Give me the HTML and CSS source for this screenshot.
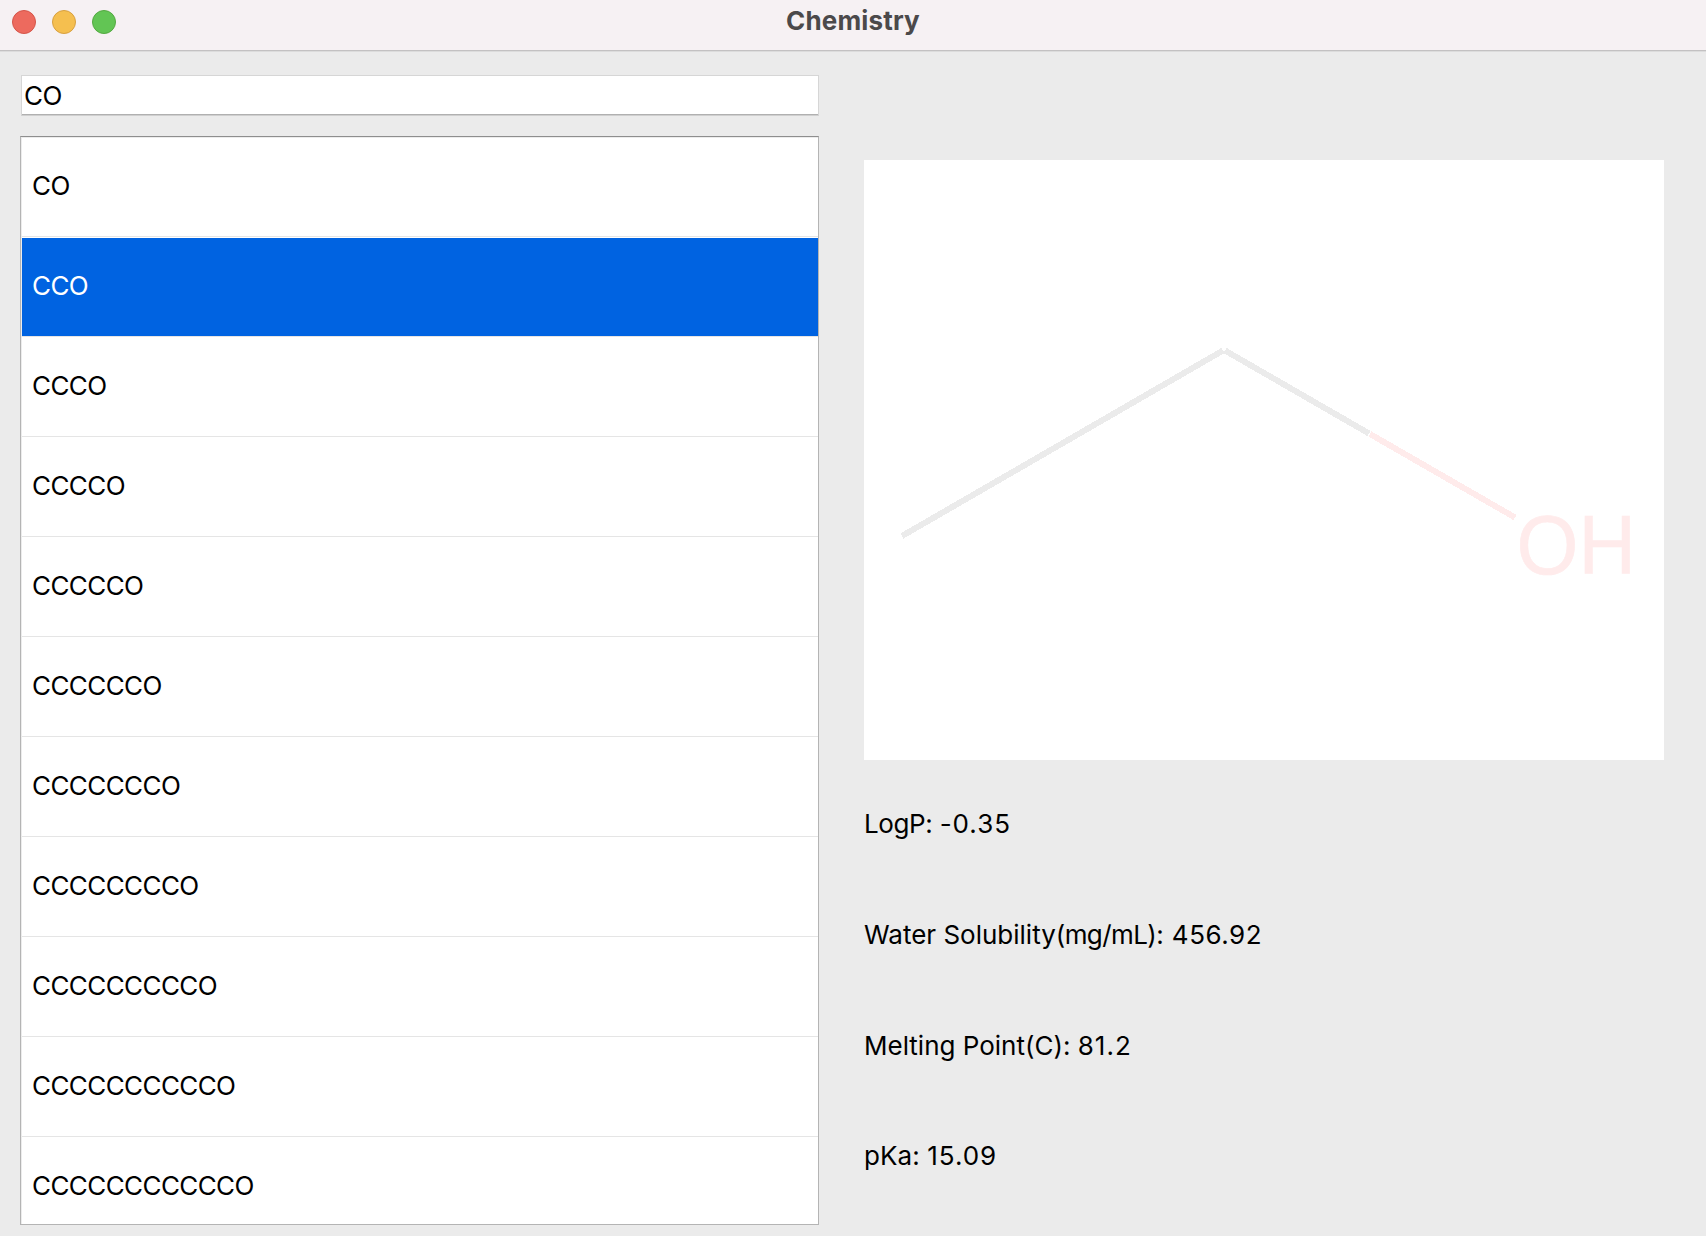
FILE: index.html
```html
<!DOCTYPE html>
<html lang="en">
<head>
<meta charset="utf-8">
<title>Chemistry</title>
<link rel="stylesheet" href="styles.css">
</head>
<body>
<div class="window">
  <header class="titlebar">
    <div class="controls">
      <span class="dot close"></span>
      <span class="dot minimize"></span>
      <span class="dot expand"></span>
    </div>
    <h1 class="title">Chemistry</h1>
  </header>
  <main class="content">
    <section class="search">
      <div class="query">CO</div>
      <ul class="results">
        <li class="row">CO</li>
        <li class="row selected">CCO</li>
        <li class="row">CCCO</li>
        <li class="row">CCCCO</li>
        <li class="row">CCCCCO</li>
        <li class="row">CCCCCCO</li>
        <li class="row">CCCCCCCO</li>
        <li class="row">CCCCCCCCO</li>
        <li class="row">CCCCCCCCCO</li>
        <li class="row">CCCCCCCCCCO</li>
        <li class="row">CCCCCCCCCCCO</li>
      </ul>
    </section>
    <section class="details">
      <svg class="molecule" width="800" height="600" viewBox="0 0 800 600">
        <g fill="none" stroke-width="6" shape-rendering="crispEdges">
          <path class="carbon" d="M38 376L359 190.500M361 190.500L505 273.500"/>
          <path class="oxygen" d="M506 274L651 357.500"/>
        </g>
        <text class="atom" transform="translate(652.5 414) scale(0.995 1.045)">OH</text>
      </svg>
      <p class="property"><span class="name tight">LogP:</span> <span class="value">-0.35</span></p>
      <p class="property"><span class="name">Water Solubility</span><span class="unit">(mg/mL):</span> <span class="value dense">456.92</span></p>
      <p class="property"><span class="name">Melting Point(C):</span> <span class="value">81.2</span></p>
      <p class="property"><span class="name wide">pKa:</span> <span class="value">15.09</span></p>
    </section>
  </main>
</div>
</body>
</html>
```
FILE: styles.css
```css
* { box-sizing: border-box; }

body {
  margin: 0;
  font: 26px/32px Inter, "Liberation Sans", sans-serif;
  color: #000;
}

.window {
  display: flex;
  flex-direction: column;
  width: 1706px;
  height: 1236px;
  overflow: hidden;
  background: #ebebeb;
}

.titlebar {
  display: grid;
  grid-template-columns: 1fr auto 1fr;
  flex: none;
  height: 52px;
  padding: 0 12px;
  background: #f6f1f3;
  border-bottom: 1px solid #dcdcdc;
  box-shadow: inset 0 -1px #c3c1c2;
}

.controls {
  display: flex;
  gap: 16px;
  padding-top: 10px;
}

.dot {
  width: 24px;
  height: 24px;
  border: 1px solid;
  border-radius: 50%;
}

.close { background: #ed6a5e; border-color: #d55549; }
.minimize { background: #f5bf4f; border-color: #d8a040; }
.expand { background: #62c554; border-color: #54a941; }

.title {
  margin: 0;
  padding-top: 5px;
  font-size: 26px;
  font-weight: 700;
  line-height: 32px;
  letter-spacing: 0.15px;
  color: #4b494a;
}

.content {
  display: flex;
  flex: 1;
  gap: 45px;
  min-height: 0;
  padding: 23px 42px 11px 20px;
}

.search {
  display: flex;
  flex-direction: column;
  gap: 20px;
  width: 799px;
}

.query {
  flex: none;
  height: 41px;
  margin-left: 1px;
  padding: 4px 0 0 2px;
  letter-spacing: -0.58px;
  background: #fff;
  border: 1px solid #d6d6d6;
  border-bottom-color: #cfcfcf;
  box-shadow: inset 0 -1px #b0b0b0;
}

.results {
  flex: 1;
  min-height: 0;
  margin: 0;
  padding: 0 0 0 1px;
  overflow: hidden;
  list-style: none;
  letter-spacing: -0.58px;
  background: #fff;
  border: 1px solid #b4b4b4;
  border-top-color: #8e8e8e;
  box-shadow: inset 1px 1px #ececec;
}

.row {
  height: 100px;
  padding: 33px 0 0 10px;
  border-bottom: 1px solid #e5e5e5;
}

.row.selected {
  background: #0063e1;
  box-shadow: inset 0 1px #fff;
  color: #fff;
}

.details {
  width: 800px;
  padding-top: 85px;
}

.molecule {
  display: block;
  background: #fff;
}

.carbon { stroke: #ebebeb; }
.oxygen { stroke: #ffebeb; }

.atom {
  fill: #ffebeb;
  stroke: #ffebeb;
  stroke-width: 0.6px;
  font: 80px "Liberation Sans", Arial, sans-serif;
}

.property {
  height: 110.8px;
  margin: 0;
  padding-top: 48px;
  white-space: nowrap;
}

.name.tight { letter-spacing: -0.4px; }
.name.wide { letter-spacing: 0.1px; }
.unit { letter-spacing: -0.6px; }
.value { letter-spacing: 1px; }
.value.dense { margin-left: 1.5px; letter-spacing: 0.5px; }
```
